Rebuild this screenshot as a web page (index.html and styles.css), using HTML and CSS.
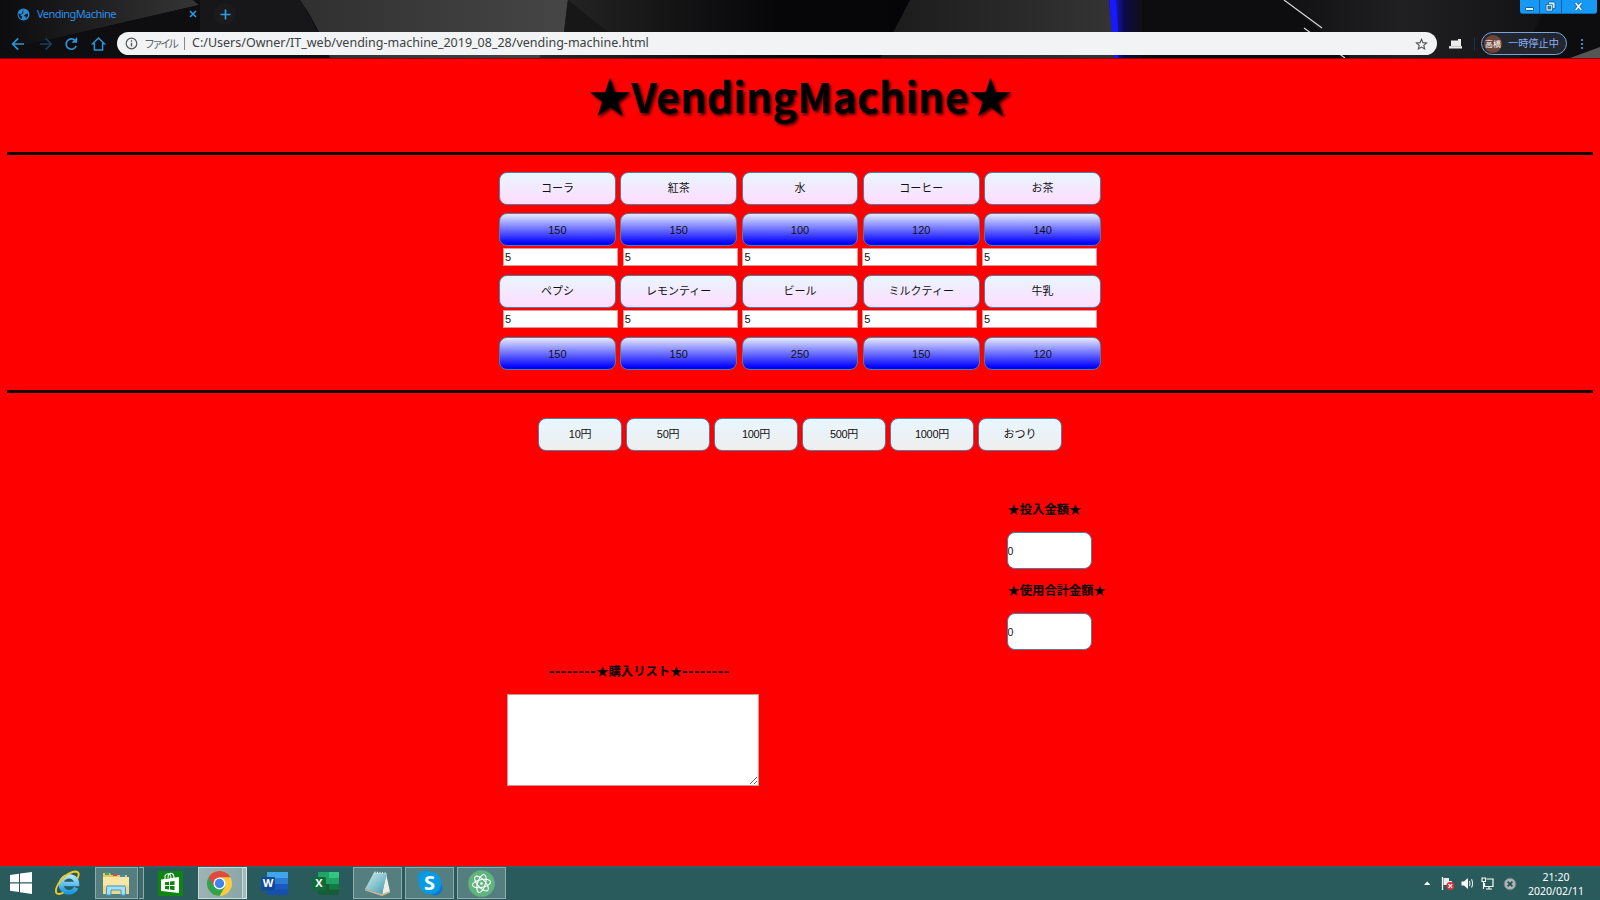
FILE: index.html
```html
<!DOCTYPE html>
<html lang="ja">
<head>
<meta charset="utf-8">
<title>VendingMachine</title>
<link rel="stylesheet" href="styles.css">
</head>
<body>
<div class="screen">
  <header class="browser">
    <svg class="theme" width="1600" height="58" viewBox="0 0 1600 58">
      <defs>
        <linearGradient id="g1" x1="0" x2="1"><stop offset="0" stop-color="#0c0b0d"/><stop offset="1" stop-color="#353536"/></linearGradient>
        <linearGradient id="g2" x1="0" x2="1"><stop offset="0" stop-color="#303030"/><stop offset="1" stop-color="#464646"/></linearGradient>
        <linearGradient id="g3" x1="0" x2="1"><stop offset="0" stop-color="#272727"/><stop offset=".65" stop-color="#060507"/><stop offset="1" stop-color="#050407"/></linearGradient>
        <linearGradient id="g4" x1="0" x2="1"><stop offset="0" stop-color="#1b1b1b"/><stop offset="1" stop-color="#343434"/></linearGradient>
        <linearGradient id="g5" x1="0" x2="1"><stop offset="0" stop-color="#1616c0"/><stop offset=".35" stop-color="#09094a"/><stop offset="1" stop-color="#111013"/></linearGradient>
        <linearGradient id="g6" x1="0" x2="1"><stop offset="0" stop-color="#111012"/><stop offset=".45" stop-color="#201f21"/><stop offset="1" stop-color="#121114"/></linearGradient>
      </defs>
      <rect width="1600" height="58" fill="#0d0c0f"/>
      <path d="M0 0H193L199 5L0 51Z" fill="url(#g1)"/>
      <path d="M193 0H300L325 40V58H0V51L199 5Z" fill="#0e0d10"/>
      <path d="M200 0H300L318 32H200Z" fill="#171618"/>
      <path d="M300 0H568L564 32L540 58H330Q318 25 300 0Z" fill="url(#g2)"/>
      <path d="M568 0H910L890 58H540L543 32H564Z" fill="url(#g3)"/>
      <path d="M568 0L608 32H564Z" fill="#171717"/>
      <path d="M910 0H1109L1115 58H880Z" fill="url(#g4)"/>
      <path d="M1115 0H1142V58H1117Z" fill="url(#g5)"/>
      <path d="M1109 0H1116L1118 30V58H1114Z" fill="#1919ff"/>
      <path d="M1284 0H1550L1520 58H1350L1322 32Z" fill="url(#g6)"/>
      <path d="M1284 0L1322 28M1304 28L1345 58" stroke="#d5d5d8" stroke-width="1.2" fill="none"/>
      <path d="M1570 58L1600 47V58Z" fill="#555"/>
    </svg>
    <div class="tabs">
      <svg class="globe" width="13" height="13" viewBox="0 0 13 13"><circle cx="6.5" cy="6.5" r="6" fill="#2b8ad0"/><path d="M7.3 1.6L5.2 3.2L6.6 5L4.6 6.4L1.6 5.6Q1 9.5 4.6 11.2L5.2 8.8L3.4 7.4M8 6.4L10.6 5.6L11 8L8.6 10.4L8.8 8.6L7 8Z" fill="#0e1823"/></svg>
      <span class="tab-title">VendingMachine</span>
      <svg class="tab-close" width="8" height="8" viewBox="0 0 8 8"><path d="M1 1L7 7M7 1L1 7" stroke="#2ba0ee" stroke-width="1.5"/></svg>
      <span class="newtab"><svg width="11" height="11" viewBox="0 0 11 11"><path d="M5.5 .5V10.5M.5 5.5H10.5" stroke="#2d9ce6" stroke-width="1.7"/></svg></span>
      <div class="winbtns">
        <span class="wb min"><svg width="9" height="4" viewBox="0 0 9 4"><rect x=".5" y=".5" width="8" height="3" rx=".6" fill="#e8f6ff" stroke="#1a5c88"/></svg></span>
        <span class="wb max"><svg width="11" height="11" viewBox="0 0 11 11"><path d="M3.5 1H10V7.5H7.5V10H1V3.5H3.5Z" fill="#d8f0ff" stroke="#1a5c88" stroke-width=".8"/><path d="M3.5 3.5H7.5V7.5" fill="none" stroke="#1a5c88" stroke-width=".7"/><rect x="3" y="5.2" width="2.8" height="2.8" fill="#1487d8" stroke="#1a5c88" stroke-width=".7"/></svg></span>
        <span class="wb cls"><svg width="9" height="9" viewBox="0 0 9 9"><path d="M1.5 1L7.5 8M7.5 1L1.5 8" stroke="#1a5c88" stroke-width="3"/><path d="M1.7 1L7.3 8M7.3 1L1.7 8" stroke="#e8f6ff" stroke-width="1.8"/></svg></span>
      </div>
    </div>
    <div class="toolbar">
      <svg class="nav" width="106" height="24" viewBox="0 0 106 24" fill="none" stroke="#2d94dc" stroke-width="1.7">
        <path d="M14 12H3M8.2 6.4L2.6 12L8.2 17.6"/>
        <path d="M30 12H41M35.6 6.4L41.2 12L35.6 17.6" stroke="#17405f"/>
        <path d="M66.2 14A5.2 5.2 0 1 1 65 8.3"/><path d="M67.2 5V10.8H61.4Z" fill="#2d94dc" stroke="none"/>
        <path d="M82.6 11.8H84.4V17.9H92.6V11.8H94.4L88.5 6Z" stroke-width="1.5"/>
      </svg>
      <div class="address">
        <svg width="13" height="13" viewBox="0 0 13 13"><circle cx="6.5" cy="6.5" r="5.3" fill="none" stroke="#55585c" stroke-width="1.2"/><path d="M6.5 5.7V9.6M6.5 3.3V4.7" stroke="#55585c" stroke-width="1.3"/></svg>
        <span class="scheme">ファイル</span>
        <span class="bar"></span>
        <span class="url">C:/Users/Owner/IT_web/vending-machine_2019_08_28/vending-machine.html</span>
        <svg class="fav" width="13" height="12" viewBox="0 0 24 23"><path d="M12 2.5L14.7 8.9L21.7 9.5L16.4 14.1L18 20.9L12 17.3L6 20.9L7.6 14.1L2.3 9.5L9.3 8.9Z" fill="none" stroke="#505356" stroke-width="2.1"/></svg>
      </div>
      <svg class="ext" width="13" height="11" viewBox="0 0 13 11"><path d="M2 2.5H9V1H12V8H13V10.5H0V8H2Z" fill="#ededed"/><path d="M0 8.4H13" stroke="#aaa" stroke-width=".6"/></svg>
      <span class="sep"></span>
      <span class="profile"><span class="avatar">高橋</span><span class="state">一時停止中</span></span>
      <span class="dots"><i></i><i></i><i></i></span>
    </div>
  </header>

  <main class="page">
    <h1 class="title">★<span>VendingMachine</span>★</h1>
    <hr>
    <section class="machine">
      <div class="row names"><button>コーラ</button><button>紅茶</button><button>水</button><button>コーヒー</button><button>お茶</button></div>
      <div class="row prices"><button>150</button><button>150</button><button>100</button><button>120</button><button>140</button></div>
      <div class="stock"><input value="5"><input value="5"><input value="5"><input value="5"><input value="5"></div>
      <div class="row names"><button>ペプシ</button><button>レモンティー</button><button>ビール</button><button>ミルクティー</button><button>牛乳</button></div>
      <div class="stock"><input value="5"><input value="5"><input value="5"><input value="5"><input value="5"></div>
      <div class="row prices"><button>150</button><button>150</button><button>250</button><button>150</button><button>120</button></div>
    </section>
    <hr>
    <section class="money"><button>10円</button><button>50円</button><button>100円</button><button>500円</button><button>1000円</button><button class="change">おつり</button></section>
    <section class="totals">
      <p class="label">★投入金額★</p>
      <input class="amount" value="0">
      <p class="label">★使用合計金額★</p>
      <input class="amount" value="0">
    </section>
    <section class="bought">
      <p class="label"><span class="dash">--------</span>★購入リスト★<span class="dash">--------</span></p>
      <textarea></textarea>
    </section>
  </main>

  <footer class="taskbar">
    <span class="task start"><svg width="22" height="22" viewBox="0 0 22 22" fill="#fff"><path d="M0 3L9 1.7V10.3H0ZM10 1.5L22 0V10.3H10ZM0 11.5H9V20L0 18.8ZM10 11.5H22V22L10 20.3Z"/></svg></span>
    <span class="task ie"><svg width="26" height="26" viewBox="0 0 26 26"><defs><linearGradient id="ieb" x1="0" y1="0" x2="0" y2="1"><stop offset="0" stop-color="#a9e5fb"/><stop offset="1" stop-color="#1a9be0"/></linearGradient></defs><path d="M21.2 17.8A8 8 0 1 1 22 14H8.5" fill="none" stroke="url(#ieb)" stroke-width="4.6"/><path d="M22.5 8.5Q25.5 2 21 1.4Q14 1.5 6 10Q-1.5 20.5 2 23.5Q4.5 25 8.5 22.5" fill="none" stroke="#f4c622" stroke-width="2"/></svg></span>
    <span class="task box explorer"><svg width="28" height="25" viewBox="0 0 28 25"><path d="M1 2H8L9 4H25V23H1Z" fill="#e7c66a"/><path d="M3 1H7V4H3Z" fill="#3da35a"/><path d="M11 3H15V5H11Z" fill="#d44"/><path d="M18 4H23V6H18Z" fill="#3b8ed0"/><path d="M1 6H27V23H1Z" fill="#f7e6a4"/><path d="M1 14H27V23H1Z" fill="#f1d787"/><path d="M4.5 24V16.5Q4.5 15 6 15H22Q23.5 15 23.5 16.5V24H19V19H9V24Z" fill="#a5def5" stroke="#3b9ccb"/></svg></span><span class="stack"></span>
    <span class="task store"><svg width="25" height="25" viewBox="0 0 25 25"><rect width="25" height="25" fill="#0d850e"/><path d="M3 8.5L21 6V22L3 20Z" fill="#fff"/><path d="M7 8V5Q8 2 11.5 3Q13 4 13 7M10 7Q10 1.5 14 2.5Q16 3.5 16 7" fill="none" stroke="#fff" stroke-width="1.1"/><path d="M7 11.2L11 10.7V14H7ZM12 10.6L16.5 10V14H12ZM7 15H11V18.5L7 18ZM12 15H16.5V19.2L12 18.6Z" fill="#0d850e"/></svg></span>
    <span class="task box chrome"><svg width="25" height="25" viewBox="0 0 48 48"><circle cx="24" cy="24" r="24" fill="#fcca3e"/><path d="M24 24L3.2 12A24 24 0 0 0 24 48L34.4 30Z" fill="#2fa34f"/><path d="M3.2 12A24 24 0 0 1 44.8 12H24L13.6 30Z" fill="#dd4b3e"/><circle cx="24" cy="24" r="11.5" fill="#fff"/><circle cx="24" cy="24" r="9" fill="#4083ee"/></svg></span><span class="stack light"></span>
    <span class="task word"><svg width="27" height="23" viewBox="0 0 27 23"><rect x="6" width="21" height="23" rx="1" fill="#174fae"/><path d="M6 0H27V6H6Z" fill="#41a5ee"/><path d="M6 6H27V12H6Z" fill="#2b7cd3"/><path d="M6 12H27V17.5H6Z" fill="#185abd"/><rect y="5" width="14" height="13.5" rx="1" fill="#104a9e"/></svg><b>W</b></span>
    <span class="task excel"><svg width="27" height="23" viewBox="0 0 27 23"><rect x="6" width="21" height="23" rx="1" fill="#185c37"/><path d="M6 0H17V12H6Z" fill="#21a366"/><path d="M17 0H27V6H17Z" fill="#33c481"/><path d="M17 6H27V12H17Z" fill="#21a366"/><path d="M17 12H27V17.5H17Z" fill="#107c41"/><rect y="5" width="14" height="13.5" rx="1" fill="#0f6b39"/></svg><b>X</b></span>
    <span class="task box note"><svg width="27" height="25" viewBox="0 0 27 25"><defs><linearGradient id="nt" x1="0" y1="0" x2="1" y2="1"><stop offset="0" stop-color="#d5eef2"/><stop offset="1" stop-color="#3d9cad"/></linearGradient></defs><path d="M22 2L26 21L18 24.5Z" fill="#efeee5"/><path d="M10 1.5L23 2.5L18 23L1 18Z" fill="url(#nt)"/><path d="M1 18L18 23L26 20V21.5L18 25L1 19.5Z" fill="#c7b992"/><path d="M11 .5V2.5M13.5 .7V2.7M16 .9V2.9M18.5 1.1V3.1M21 1.3V3.3" stroke="#e8eeee"/></svg></span>
    <span class="task box skype"><svg width="26" height="26" viewBox="0 0 26 26"><circle cx="8" cy="8" r="7.5" fill="#0a95dc"/><circle cx="18" cy="18" r="7.5" fill="#0a78d0"/><circle cx="13" cy="13" r="11.3" fill="#089ae2"/></svg><b>S</b></span>
    <span class="task box atom"><svg width="27" height="27" viewBox="0 0 27 27"><circle cx="13.5" cy="13.5" r="13.3" fill="#5fb57d"/><g fill="none" stroke="#fff" stroke-width="1.1"><ellipse cx="13.5" cy="13.5" rx="9.3" ry="3.9" transform="rotate(-12 13.5 13.5)"/><ellipse cx="13.5" cy="13.5" rx="9.3" ry="3.9" transform="rotate(48 13.5 13.5)"/><ellipse cx="13.5" cy="13.5" rx="9.3" ry="3.9" transform="rotate(108 13.5 13.5)"/></g><circle cx="13.5" cy="13.5" r="1.3" fill="#fff"/></svg></span>
    <svg class="tray" width="100" height="20" viewBox="0 0 100 20">
      <path d="M4 12L7.2 8.5L10.4 12Z" fill="#fff"/>
      <path d="M22.5 4V17" stroke="#fff" stroke-width="1.3"/><path d="M23.5 5H29V8H32V12H23.5Z" fill="#e5eded"/><circle cx="30.3" cy="13" r="4" fill="#d9323a"/><path d="M28.5 11.2L32.1 14.8M32.1 11.2L28.5 14.8" stroke="#fff" stroke-width="1.2"/>
      <path d="M41.5 8.5H44L48 5V16L44 12.5H41.5Z" fill="#fff"/><path d="M49.5 8Q50.7 10.4 49.5 13M51.5 6.3Q53.7 10.5 51.5 14.5" fill="none" stroke="#e5eeee" stroke-width="1.1"/>
      <path d="M66.5 6H73V13.5H64.5V10M66 16H72M69 13.5V16" fill="none" stroke="#fff" stroke-width="1.2"/><path d="M62 5H65.5V8.5H62ZM63.5 8.5V16" fill="none" stroke="#fff" stroke-width="1.1"/>
      <circle cx="90" cy="11" r="5.8" fill="#aab6b6" stroke="#6f8585"/><path d="M87.6 8.6L92.4 13.4M92.4 8.6L87.6 13.4" stroke="#2d4c4e" stroke-width="1.7"/>
    </svg>
    <div class="clock"><span>21:20</span><span class="date">2020/02/11</span></div>
  </footer>
</div>
</body>
</html>
```
FILE: styles.css
```css
* { box-sizing: border-box; }
body { margin: 0; font-family: "Liberation Sans", "Noto Sans CJK JP", sans-serif; }
.screen { width: 1600px; height: 900px; display: flex; flex-direction: column; overflow: hidden; background: #f00; }

.browser { position: relative; height: 59px; flex: none; background: #0d0c0f; border-bottom: 1px solid #8a0507; }
.theme { position: absolute; left: 0; top: 0; }
.tabs { position: relative; display: flex; align-items: center; height: 28px; padding-left: 17px; }
.globe { margin-right: 7px; }
.tab-title { width: 152px; color: #2d8fe8; font: 11px "Noto Sans", sans-serif; line-height: 26px; padding-bottom: 1px; letter-spacing: -.55px; }
.newtab { width: 22px; height: 22px; margin-left: 17px; border-radius: 50%; background: #1b1a1d; display: flex; align-items: center; justify-content: center; }
.winbtns { display: flex; align-self: flex-start; height: 14px; margin-left: auto; margin-right: 3px; background: #1698f5; border-radius: 0 0 3px 3px; border-bottom: 1px solid #0c6cb4; }
.wb { display: flex; align-items: center; justify-content: center; }
.wb + .wb { border-left: 1px solid #0b5c9c; }
.min { width: 19px; padding-top: 4px; }
.max { width: 22px; }
.cls { width: 36px; padding-right: 2px; }

.toolbar { position: relative; display: flex; align-items: center; height: 23px; margin-top: 4px; padding-left: 10px; }
.nav { margin-right: 1px; flex: none; }
.address { display: flex; align-items: center; width: 1320px; height: 23px; flex: none; border-radius: 12px; background: #f1f3f4; padding: 0 9px 0 8px; }
.scheme { width: 33px; margin-left: 6px; font: 11px/20px "Noto Sans CJK JP", sans-serif; color: #5f6368; display: inline-block; white-space: nowrap; letter-spacing: -3px; margin-bottom: 1px; }
.bar { width: 1px; height: 13px; background: #888; margin: 0 7px 0 7px; }
.url { font: 12.5px/21px "Noto Sans", sans-serif; color: #3c3f43; white-space: nowrap; margin-bottom: 2px; }
.fav { margin-left: auto; }
.ext { margin-left: 12px; }
.sep { width: 1px; height: 14px; background: #15324a; margin: 0 6px 0 12px; }
.profile { display: flex; align-items: center; width: 86px; height: 23px; border: 1px solid #7ba3dc; border-radius: 12px; background: #21262f; padding-left: 2px; }
.avatar { width: 18px; height: 18px; border-radius: 50%; background: #704538; color: #fff; font: 8px/17px "Noto Sans CJK JP", sans-serif; text-align: center; white-space: nowrap; }
.state { margin-left: 6px; color: #8ab0f8; font: 10.2px "Noto Sans CJK JP", sans-serif; white-space: nowrap; margin-bottom: 2px; }
.dots { display: flex; flex-direction: column; gap: 2px; margin-left: 14px; }
.dots i { width: 2px; height: 2px; background: #2d8bcb; }

.page { flex: 1; display: flex; flex-direction: column; align-items: center; padding: 0 7px; background: #f00; color: #000; }
.title { margin: 0; height: 93px; font: bold 43px/71px "Noto Sans CJK JP", sans-serif; text-shadow: 2px 2px 3px rgba(0, 0, 0, .75); white-space: nowrap; }
.title span { font-size: 41px; letter-spacing: .25px; }
hr { width: 100%; height: 3px; margin: 0; border: 0; background: #120000; flex: none; }
button { padding: 0; font: 11px "Liberation Sans", "Noto Sans CJK JP", sans-serif; color: #111; border: 1px solid #557ca0; border-radius: 8px; height: 33px; }
.machine { display: flex; flex-direction: column; width: 602px; margin: 17px 0 20px; }
.row { display: grid; grid-template-columns: repeat(5, 1fr); column-gap: 4.5px; }
.names button { background: linear-gradient(#e8f6ff, #ffdcff); padding-bottom: 3px; }
.prices { margin-top: 8px; }
.prices button { background: linear-gradient(#e4eaff, #00f 95%); }
.stock { display: grid; grid-template-columns: repeat(5, 1fr); column-gap: 4.6px; width: 594px; margin: 2px 0 0 4px; }
.stock input { width: 100%; min-width: 0; height: 18px; padding: 0 1px; border: 1px solid #dd9a9a; background: #fff; color: #111; font: 11px "Liberation Sans", sans-serif; }
.stock + .row { margin-top: 9px; }
.money { display: flex; gap: 4.7px; margin-top: 25px; }
.money button { width: 83.3px; background: linear-gradient(#e8f6ff, #eee); padding-bottom: 3px; }
.money button:not(.change) { letter-spacing: -.3px; }
.totals { display: flex; flex-direction: column; width: 100px; align-self: flex-start; margin: 49px 0 0 999.5px; }
.label { margin: 0; height: 19px; font: bold 12.3px/19px "Noto Sans CJK JP", sans-serif; white-space: nowrap; }
.totals .label { margin-left: 1px; }
.amount { width: 85px; height: 37px; margin: 13px 0 12px; padding: 1px 0 0; border: 1px solid #557ca0; border-radius: 8px; background: #fff; font: 10.5px "Liberation Sans", sans-serif; color: #111; }
.bought { align-self: flex-start; width: 252px; margin-left: 500px; }
.bought .label { margin-left: 42px; }
.dash { font-family: "DejaVu Sans", sans-serif; letter-spacing: .8px; }
textarea { display: block; width: 252px; height: 92px; margin-top: 13px; border: 1px solid #c99; background: #fff; }

.taskbar { position: relative; display: flex; align-items: center; height: 34px; flex: none; background: linear-gradient(#356365, #295b5d 3px, #295b5d); color: #fff; }
.task { position: relative; display: flex; align-items: center; justify-content: center; height: 32px; flex: none; }
.box { background: #547e7f; border: 1px solid #91abac; }
.start { margin-left: 10px; }
.ie { margin-left: 23px; }
.explorer { width: 43px; margin-left: 14px; padding-right: 2px; }
.stack { width: 5px; height: 32px; margin-left: 1px; border: solid #91abac; border-width: 1px 1px 1px 0; background: #41696a; }
.store { margin-left: 14px; }
.chrome { width: 45px; margin-left: 15px; padding-right: 2px; background: linear-gradient(100deg, #9db4b5, #8ba6a7); border-color: #cad7d7; }
.light { width: 4px; background: #a4baba; border-color: #dbe4e4; }
.stack.light { margin-left: 0; }
.word { margin-left: 14px; }
.excel { margin-left: 24px; }
.task b { position: absolute; color: #fff; }
.word b, .excel b { left: 0; top: 9px; width: 14px; text-align: center; font: bold 11px/14px "Open Sans", sans-serif; }
.note { width: 49px; margin-left: 14px; }
.skype { width: 49px; margin-left: 3px; }
.skype b { font: bold 20px/30px "Open Sans", sans-serif; }
.atom { width: 49px; margin-left: 3px; }
.tray { margin-left: auto; margin-right: 0; }
.clock { display: flex; flex-direction: column; align-items: center; width: 78px; font: 10.5px/14px "Noto Sans", sans-serif; margin-right: 5px; margin-left: -3px; padding-top: 1px; }
```
